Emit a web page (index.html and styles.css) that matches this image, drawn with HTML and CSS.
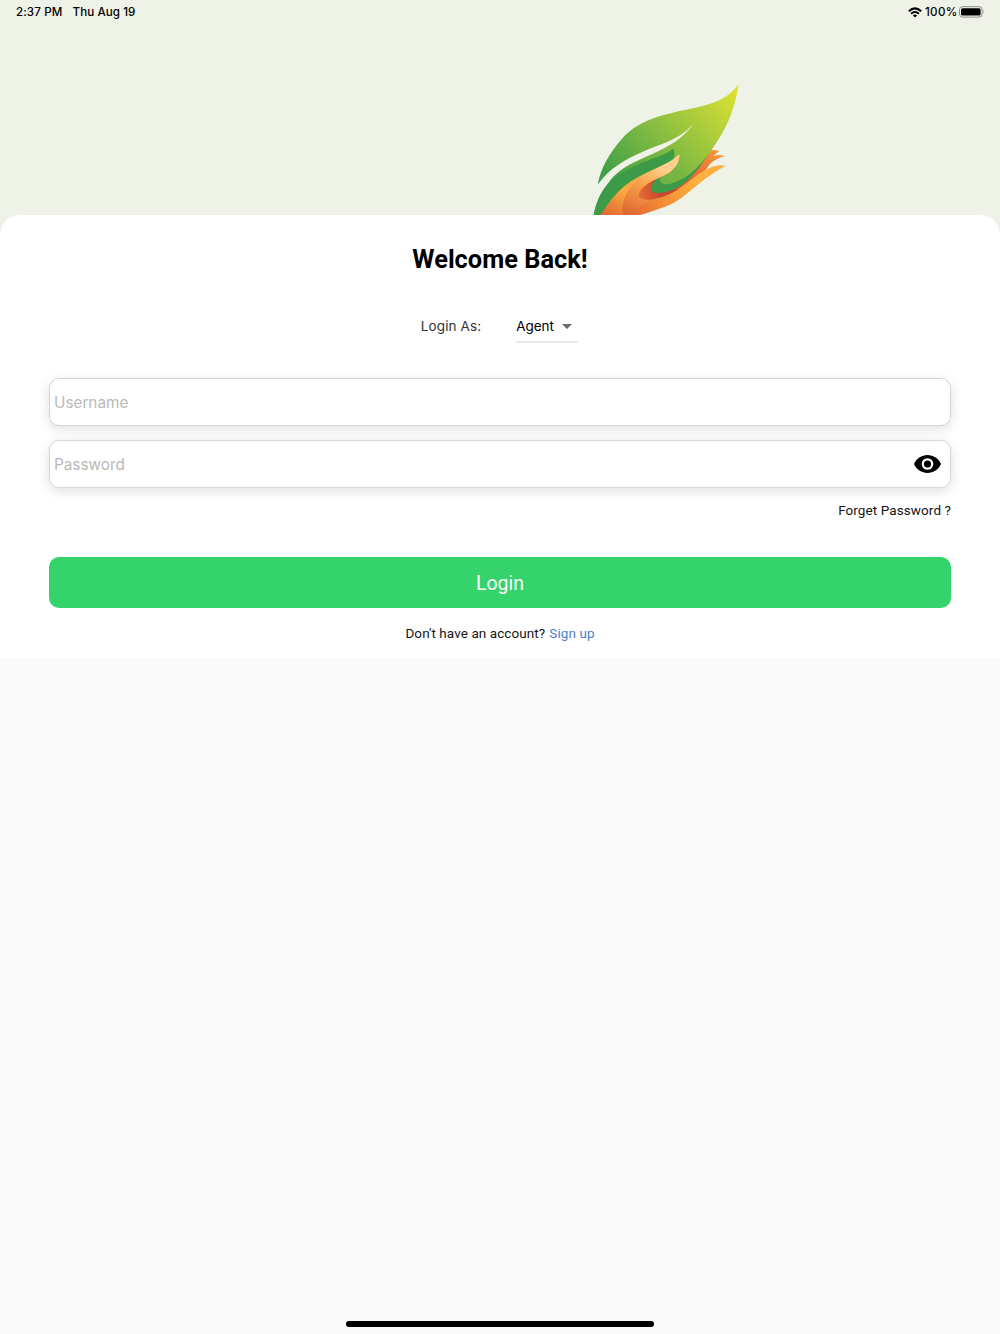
FILE: index.html
```html
<!DOCTYPE html>
<html lang="en">
<head>
<meta charset="utf-8">
<title>Login</title>
<link rel="stylesheet" href="styles.css">
</head>
<body>
<div class="screen">
  <header class="hero">
    <div class="status">
      <span class="time">2:37 PM</span>
      <span class="date">Thu Aug 19</span>
      <svg class="wifi" width="14" height="11" viewBox="0 0 14 11"><g fill="none" stroke="#000" stroke-width="2"><path d="M.8 4.3Q7-1.5 13.2 4.3"/><path d="M3.1 6.8Q7 3.2 10.9 6.8"/></g><path d="M4.9 8.4Q7 6.7 9.1 8.4L7 10.6Z"/></svg>
      <span class="percent">100%</span>
      <svg class="battery" width="26" height="12" viewBox="0 0 26 12"><rect x=".5" y=".7" width="22.6" height="10.4" rx="3" fill="none" stroke="#8d8f89"/><rect x="2" y="2.2" width="19.6" height="7.4" rx="1.6"/><path d="M24.3 4.1Q25.6 5.9 24.3 7.7Z" fill="#8d8f89"/></svg>
    </div>
    <svg class="logo" width="165" height="140" viewBox="0 0 495 420">
      <defs>
        <linearGradient id="leaf" gradientUnits="userSpaceOnUse" x1="110" y1="350" x2="440" y2="30"><stop offset="0" stop-color="#3f9f47"/><stop offset=".46" stop-color="#8abe40"/><stop offset="1" stop-color="#dde232"/></linearGradient>
        <linearGradient id="lobe" gradientUnits="userSpaceOnUse" x1="225" y1="325" x2="300" y2="240"><stop offset="0" stop-color="#6bb043"/><stop offset="1" stop-color="#8abe40"/></linearGradient>
        <linearGradient id="palm" gradientUnits="userSpaceOnUse" x1="80" y1="425" x2="140" y2="310"><stop offset="0" stop-color="#e26c34"/><stop offset=".65" stop-color="#fbaa40"/><stop offset="1" stop-color="#f9a746"/></linearGradient>
        <linearGradient id="hand" gradientUnits="userSpaceOnUse" x1="150" y1="420" x2="330" y2="310"><stop offset="0" stop-color="#e26c34"/><stop offset=".4" stop-color="#f28a35"/><stop offset="1" stop-color="#fdb041"/></linearGradient>
        <linearGradient id="thumb" gradientUnits="userSpaceOnUse" x1="145" y1="420" x2="225" y2="275"><stop offset="0" stop-color="#e06a33"/><stop offset=".55" stop-color="#f9a148"/><stop offset="1" stop-color="#ffd08d"/></linearGradient>
        <linearGradient id="finger" gradientUnits="userSpaceOnUse" x1="290" y1="335" x2="410" y2="235"><stop offset="0" stop-color="#d9572f"/><stop offset="1" stop-color="#f79a3e"/></linearGradient>
        <linearGradient id="shade" gradientUnits="userSpaceOnUse" x1="165" y1="365" x2="225" y2="345"><stop offset="0" stop-color="#e16d34"/><stop offset="1" stop-color="#cb452d"/></linearGradient>
      </defs>
      <path fill="url(#finger)" d="M365 228Q386 222 403 229Q394 234 385 243Q405 237 420 244Q395 249 376 266L350 300L240 372L235 340Z"/>
      <path fill="url(#leaf)" d="M461 27C421 83 362 91 295 106C215 124 157 140 111 191C70 237 47 282 38 329C74 278 121 253 180 227C247 200 290 190 330 141C294 193 248 215 207 235C145 263 110 275 75 317C48 350 33 384 26 420L150 400L262 282L270 322C315 303 342 273 371 236C416 178 450 110 461 27Z"/>
      <path fill="#3b9b48" d="M26 420C33 384 44 357 62 335C88 306 118 289 150 273C193 250 238 251 265 221C270 237 268 249 261 261L170 330L70 420Z"/>
      <path fill="url(#palm)" d="M46 420C79 370 107 334 155 308C211 278 257 264 283 237L240 310L185 385L155 420Z"/>
      <path fill="url(#thumb)" d="M113 420C110 378 125 344 157 319C203 286 253 269 283 237C286 265 266 288 239 301L215 345L190 375L164 420Z"/>
      <path fill="url(#hand)" d="M421 273C393 265 361 282 328 307C291 335 258 359 218 370C190 375 160 370 150 350C125 365 114 390 113 420H164C190 413 217 402 240 395C280 382 307 354 340 328C366 307 395 286 421 273Z" />
      <path fill="url(#thumb)" d="M113 420C110 378 125 344 157 319L239 300L180 345C160 360 165 375 196 376C175 390 150 400 140 420Z"/>
      <path fill="url(#shade)" d="M239 299C196 318 158 341 162 365C180 384 229 373 275 346L305 315L239 299Z"/>
      <path fill="#3b9b48" d="M266 280C240 296 202 312 198 340C198 361 236 356 268 343C309 323 339 284 371 236L300 250Z"/>
      <path fill="url(#lobe)" d="M284 245C281 262 272 278 262 286C242 297 224 302 224 315C226 330 248 331 270 322C315 303 342 273 365 243L330 225L290 220Z"/>
      <path fill="url(#leaf)" d="M284 245C281 262 272 278 262 286L275 318C315 303 342 273 371 236L350 180L265 221Z"/>
      <path fill="#3b9b48" d="M265 221C270 237 268 249 261 261L215 275L150 290L200 251Q240 240 265 221Z"/>
      <path fill="url(#thumb)" d="M157 309C211 280 257 264 283 237C286 263 266 288 239 301L180 328Z"/>
    </svg>
  </header>
  <main class="card">
    <h1>Welcome Back!</h1>
    <div class="role"><span class="role-label">Login As:</span><div class="select"><span>Agent</span><svg width="10" height="5" viewBox="0 0 10 5"><path d="M0 0H10L5 5Z" fill="#6b6b6b"/></svg></div></div>
    <div class="field"><span class="hint">Username</span></div>
    <div class="field"><span class="hint">Password</span><svg width="27" height="18" viewBox="0 0 27 18"><path d="M0 9C2.4 3.5 7.5 0 13.5 0S24.6 3.5 27 9C24.6 14.5 19.5 18 13.5 18S2.4 14.5 0 9Z"/><circle cx="13.5" cy="9" r="4.7" fill="none" stroke="#fff" stroke-width="2.3"/></svg></div>
    <div class="forgot"><span>Forget Password ?</span></div>
    <div class="login"><span>Login</span></div>
    <p class="signup"><span class="ask">Don't have an account?</span><span class="link">Sign up</span></p>
  </main>
  <div class="home"></div>
</div>
</body>
</html>
```
FILE: styles.css
```css
* { box-sizing: border-box; }
body { margin: 0; font-family: Roboto, sans-serif; color: #000; }
svg { display: block; flex: none; }
span { white-space: nowrap; }
.screen { display: flex; flex-direction: column; width: 1000px; height: 1334px; background: #fafafa; }
.hero { height: 235px; background: #eff2e7; flex: none; }
.status { display: flex; align-items: center; height: 24px; padding: 0 15px 0 16px; font: 500 11.6px/24px Inter, sans-serif; }
.time { width: 56.5px; letter-spacing: .1px; }
.date { letter-spacing: .08px; }
.wifi { margin-left: auto; }
.percent { width: 37px; padding-left: 3px; letter-spacing: .3px; }
.logo { margin: 51px 0 0 585px; }
.card { height: 443px; margin-top: -20px; padding: 0 49px; background: #fff; border-radius: 20px 20px 0 0; flex: none; }
h1 { margin: 0; padding-top: 29px; font-size: 25.4px; line-height: 30px; font-weight: 700; text-align: center; }
.role { display: flex; justify-content: center; gap: 35px; margin-top: 37px; padding-right: 1px; font: 400 13.5px/30px Inter, sans-serif; }
.role-label { color: #333; letter-spacing: .1px; }
.select { display: flex; align-items: center; gap: 8px; width: 62px; height: 32px; border-bottom: 2px solid #e9e9e9; }
.field { display: flex; align-items: center; justify-content: space-between; height: 48px; padding: 0 9px 0 4px; border: 1px solid #d6d6d6; border-radius: 10px; background: #fff; box-shadow: 0 3px 12px rgba(0,0,0,.13); color: #b9b9b9; font: 400 15.3px/46px Inter, sans-serif; }
.role + .field { margin-top: 35px; }
.field + .field { margin-top: 14px; }
.hint { padding-top: 1px; }
.forgot { display: flex; justify-content: flex-end; margin-top: 12px; font-size: 13.5px; line-height: 20px; letter-spacing: .09px; color: #151515; }
.login { display: flex; justify-content: center; align-items: center; height: 51px; margin-top: 37px; padding-top: 1px; border-radius: 10px; background: #34d36b; color: #fff; font-size: 19.5px; }
.signup { display: flex; justify-content: center; gap: 4px; margin: 15px 0 0; font-size: 13.5px; line-height: 20px; letter-spacing: .08px; color: #151515; }
.link { color: #4a82c9; }
.home { width: 308px; height: 6px; margin: auto auto 7px; border-radius: 3px; background: #000; }
```
